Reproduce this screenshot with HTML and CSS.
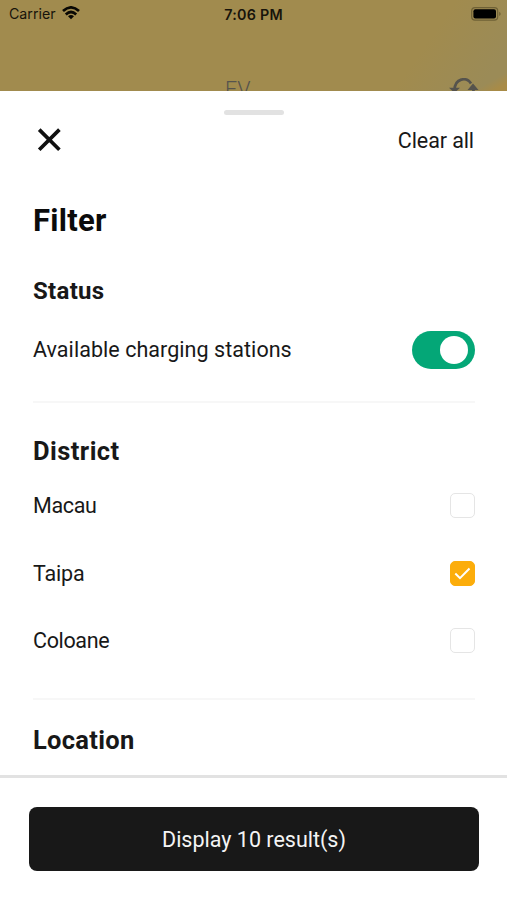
FILE: index.html
```html
<!DOCTYPE html>
<html lang="en">
<head>
<meta charset="utf-8">
<title>Filter</title>
<link rel="stylesheet" href="styles.css">
</head>
<body>
<header class="backdrop">
  <div class="statusbar">
    <div class="carrier"><span>Carrier</span>
      <svg width="18" height="14" viewBox="0 0 18 14" fill="none" stroke="#090804" stroke-width="2.7"><path d="M1 5.1Q9-2.3 17 5.1M3.8 8.4Q9 3.6 14.2 8.4"/><path d="M6 10.2Q9 7.7 12 10.2L9 13.2Z" fill="#090804" stroke="none"/></svg>
    </div>
    <time>7:06 PM</time>
    <svg class="battery" width="31" height="14" viewBox="0 0 31 14"><rect x=".7" y=".7" width="26" height="12.4" rx="3.3" fill="none" stroke="#6f6136" stroke-width="1.2"/><rect x="2.4" y="2.3" width="22.6" height="9.2" rx="2" fill="#000"/><path d="M28.2 4.7q3 2.2 0 4.4z" fill="#6f6136"/></svg>
  </div>
  <div class="page-title"><span>EV</span>
    <svg width="30" height="26" viewBox="0 0 30 26" fill="none" stroke="#55534d" stroke-width="2.7"><path d="M5.5 12C6 0 17.5-1.5 22 5.5M24.5 12C24 24 12.5 25.5 8 18.5"/><path d="M0 9.7H11L5.5 15zM18.5 12L24 5.5 29.5 12z" fill="#55534d" stroke="none"/></svg>
  </div>
</header>
<main class="sheet">
  <div class="handle"></div>
  <div class="toolbar">
    <svg width="24" height="24" viewBox="0 0 24 24" stroke="#101010" stroke-width="3.7"><path d="M2.2 1.6 22.4 21.8M22.4 1.6 2.2 21.8"/></svg>
    <span class="clear">Clear all</span>
  </div>
  <h1>Filter</h1>
  <section class="status">
    <h2 class="status-title">Status</h2>
    <div class="row"><span class="available">Available charging stations</span><span class="toggle"><i></i></span></div>
  </section>
  <section class="district">
    <h2>District</h2>
    <div class="row"><span class="macau">Macau</span><span class="check"></span></div>
    <div class="row"><span class="taipa">Taipa</span><span class="check on"><svg width="17" height="13" viewBox="0 0 17 13" fill="none" stroke="#fff" stroke-width="2"><path d="M1.3 6.5 6 11.2 15.5 1.5"/></svg></span></div>
    <div class="row"><span class="coloane">Coloane</span><span class="check"></span></div>
  </section>
  <section class="location"><h2>Location</h2></section>
</main>
<footer><button>Display 10 result(s)</button></footer>
</body>
</html>
```
FILE: styles.css
```css
* { box-sizing: border-box; }
body {
  margin: 0;
  height: 900px;
  display: flex;
  flex-direction: column;
  overflow: hidden;
  background: #fff;
  color: #181818;
  font-family: Roboto, "Liberation Sans", sans-serif;
}
svg { display: block; flex: none; }
.backdrop {
  height: 91px;
  flex: none;
  overflow: hidden;
  background: linear-gradient(150deg, transparent 95%, #a88b47 98%), linear-gradient(125deg, #a18b4e 80%, #9b8b57 95%);
}
.statusbar {
  height: 28px;
  display: grid;
  grid-template-columns: 1fr auto 1fr;
  align-items: center;
  padding: 0 6px 0 6px;
  font-family: Inter, sans-serif;
  font-size: 14.2px;
  color: #17140b;
}
.carrier { display: flex; align-items: center; gap: 6px; padding-left: 3px; margin-top: -1px; }
.carrier svg { margin-top: -1px; }
time { font-size: 14.3px; font-weight: 600; letter-spacing: .25px; }
.battery { justify-self: end; margin-right: -.5px; margin-top: -1px; }
.page-title {
  display: flex;
  justify-content: space-between;
  padding: 50px 28px 0 225px;
  margin-top: -1px;
  color: #55534d;
  font-size: 21.5px;
  font-weight: 300;
  line-height: 26px;
}
.page-title svg { margin-top: 1px; }
.sheet { height: 684px; flex: none; padding: 19px 32px 0 33px; }
.handle { width: 60px; height: 5px; margin: 0 auto; border-radius: 3px; background: #e2e2e2; }
.toolbar {
  height: 50px;
  display: flex;
  align-items: center;
  justify-content: space-between;
  padding: 0 1px 0 4px;
  font-size: 21.5px;
}
.clear { letter-spacing: -.1px; }
h1 { margin: 36px 0 0; font-size: 31px; line-height: 40px; letter-spacing: .25px; color: #0b0b0b; }
h2 { margin: 0; font-size: 25.5px; line-height: 34px; letter-spacing: .3px; }
.district h2 { letter-spacing: .45px; }
.status-title { font-size: 24px; }
.status { height: 129px; margin-top: 33px; border-bottom: 2px solid #f7f7f7; }
.status .row { height: 84px; }
.row {
  height: 67.4px;
  display: flex;
  align-items: center;
  justify-content: space-between;
  font-size: 21.5px;
}
.available { letter-spacing: .05px; margin-top: -1px; }
.macau, .coloane { letter-spacing: -.35px; }
.taipa { letter-spacing: -.15px; }
.toggle {
  width: 63px;
  height: 38px;
  padding: 5px 7px;
  border-radius: 19px;
  background: #04a777;
  display: flex;
  justify-content: flex-end;
}
.toggle i { width: 28px; height: 28px; border-radius: 50%; background: #fff; }
.district { height: 297px; padding-top: 31px; border-bottom: 2px solid #f7f7f7; }
.district h2 { height: 38px; }
.check {
  width: 25px;
  height: 25px;
  border: 1.5px solid #e5e5e5;
  border-radius: 5px;
  display: grid;
  place-items: center;
}
.check.on { background: #fcad0b; border-color: #fcad0b; }
.location { padding-top: 23px; }
footer { height: 125px; border-top: 3px solid #e2e2e2; padding: 29px 28px 0 29px; }
button {
  width: 100%;
  height: 64px;
  border: 0;
  border-radius: 8px;
  background: #181818;
  color: #f4f4f4;
  font: 21.5px Roboto, sans-serif;
}
```
